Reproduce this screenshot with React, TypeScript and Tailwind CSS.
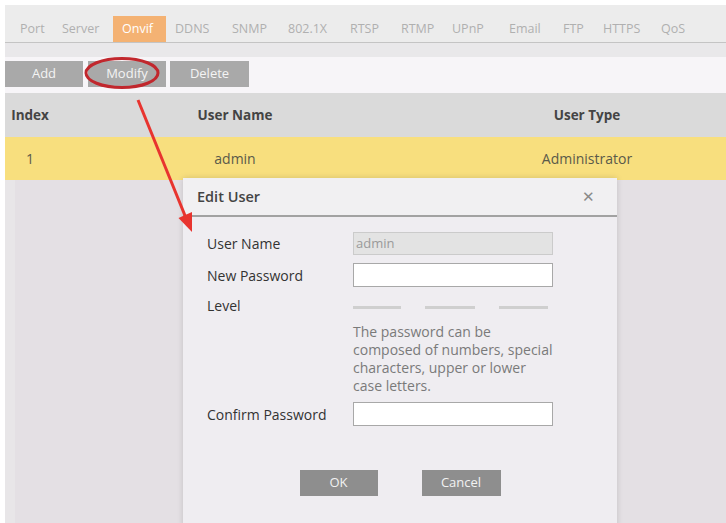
import React from 'react';

const tabs = [
  { label: 'Port', w: 'w-[42px]' },
  { label: 'Server', w: 'w-[60px]' },
  { label: 'Onvif', w: 'w-[53px]', active: true },
  { label: 'DDNS', w: 'w-[57px]' },
  { label: 'SNMP', w: 'w-[56px]' },
  { label: '802.1X', w: 'w-[62px]' },
  { label: 'RTSP', w: 'w-[51px]' },
  { label: 'RTMP', w: 'w-[51px]' },
  { label: 'UPnP', w: 'w-[57px]' },
  { label: 'Email', w: 'w-[54px]' },
  { label: 'FTP', w: 'w-[40px]' },
  { label: 'HTTPS', w: 'w-[58px]' },
  { label: 'QoS', w: 'w-[50px]' },
];

const FieldRow: React.FC<{ label: string; className?: string; children: React.ReactNode }> = ({
  label,
  className = '',
  children,
}) => (
  <div className={`flex items-center ${className}`}>
    <div className="w-[146px] text-[14px] text-[#333]">{label}</div>
    {children}
  </div>
);

const EditUserDialog: React.FC = () => (
  <div className="absolute left-[183px] top-[178px] w-[434px] h-[350px] bg-[#efedf1] shadow-[0_0_6px_rgba(0,0,0,0.15)]">
    <div className="h-[39px] bg-[#f1f0f2] border-b-2 border-[#a2a2a2] flex items-center justify-between pl-[14px] pr-[22px]">
      <span className="text-[14.5px] font-semibold text-[#444]">Edit User</span>
      <span className="text-[15px] text-[#8a8a8a] leading-none">✕</span>
    </div>
    <div className="pl-[24px]">
      <FieldRow label="User Name" className="mt-[15px]">
        <div className="w-[200px] h-[23px] bg-[#e3e3e3] border border-[#cbcbcb] flex items-center pl-[2px] text-[13px] text-[#9a9a9a]">
          admin
        </div>
      </FieldRow>
      <FieldRow label="New Password" className="mt-[8px]">
        <div className="w-[200px] h-[24px] bg-white border border-[#a8a8a8]" />
      </FieldRow>
      <FieldRow label="Level" className="mt-[9px] h-[18px]">
        <div className="flex gap-[24px] mt-[4px]">
          <div className="w-[48px] h-[3px] bg-[#cfcfcf]" />
          <div className="w-[50px] h-[3px] bg-[#cfcfcf]" />
          <div className="w-[49px] h-[3px] bg-[#cfcfcf]" />
        </div>
      </FieldRow>
      <p className="ml-[146px] mt-[9px] text-[14px] leading-[18px] text-[#7a7a7a]">
        The password can be
        <br />
        composed of numbers, special
        <br />
        characters, upper or lower
        <br />
        case letters.
      </p>
      <FieldRow label="Confirm Password" className="mt-[7px]">
        <div className="w-[200px] h-[24px] bg-white border border-[#a8a8a8]" />
      </FieldRow>
    </div>
    <div className="flex justify-center gap-[44px] mt-[44px]">
      <button className="w-[78px] h-[26px] bg-[#8e8e8e] text-[13px] text-[#f2f2f2]">OK</button>
      <button className="w-[79px] h-[26px] bg-[#8e8e8e] text-[13px] text-[#f2f2f2]">Cancel</button>
    </div>
  </div>
);

const App: React.FC = () => {
  return (
    <div
      className="relative w-[726px] h-[523px] overflow-hidden bg-white pt-[5px] pl-[5px] flex flex-col"
      style={{ fontFamily: '"Open Sans", "Liberation Sans", sans-serif' }}
    >
      {/* tab bar */}
      <div className="h-[38px] bg-[#ececec] border-b border-[#c4c4c4] flex items-end pl-[6px] shrink-0">
        {tabs.map((t) => (
          <div
            key={t.label}
            className={`${t.w} h-[26px] flex items-center pl-[9px] text-[12.5px] ${
              t.active ? 'bg-[#f4b273] text-white' : 'text-[#b0b0b0]'
            }`}
          >
            {t.label}
          </div>
        ))}
      </div>
      <div className="h-[14px] bg-[#e9e8ea] shrink-0" />

      {/* toolbar */}
      <div className="h-[36px] bg-[#f7f5f8] flex items-start pt-[4px] shrink-0">
        <button className="w-[78px] h-[26px] bg-[#a9a9a9] text-[13px] text-[#f4f4f4]">Add</button>
        <button className="ml-[5px] w-[78px] h-[26px] bg-[#a9a9a9] text-[13px] text-[#f4f4f4]">Modify</button>
        <button className="ml-[4px] w-[79px] h-[26px] bg-[#a9a9a9] text-[13px] text-[#f4f4f4]">Delete</button>
      </div>

      {/* table header */}
      <div className="h-[44px] bg-[#dadada] flex items-center text-[13.5px] font-bold text-[#444] shrink-0">
        <div className="w-[50px] text-center">Index</div>
        <div className="w-[360px] text-center">User Name</div>
        <div className="w-[33px]" />
        <div className="w-[278px] text-center">User Type</div>
      </div>

      {/* selected row */}
      <div className="h-[43px] bg-[#f8df7e] flex items-center text-[14px] text-[#5a5a4a] shrink-0">
        <div className="w-[50px] text-center">1</div>
        <div className="w-[360px] text-center">admin</div>
        <div className="w-[33px]" />
        <div className="w-[278px] text-center">Administrator</div>
      </div>

      <div className="flex-1 bg-[#e4e0e4] border-l-[10px] border-[#e8e6e8]" />

      <EditUserDialog />

      {/* annotation */}
      <svg className="absolute inset-0 pointer-events-none" width="726" height="523" viewBox="0 0 726 523">
        <ellipse cx="122" cy="73" rx="36" ry="14.5" fill="none" stroke="#c1272d" strokeWidth="3" />
        <line x1="138" y1="100" x2="186" y2="218" stroke="#e8342f" strokeWidth="3" />
        <polygon points="192,232 192,212 178.5,218" fill="#e8342f" />
      </svg>
    </div>
  );
};

export default App;
